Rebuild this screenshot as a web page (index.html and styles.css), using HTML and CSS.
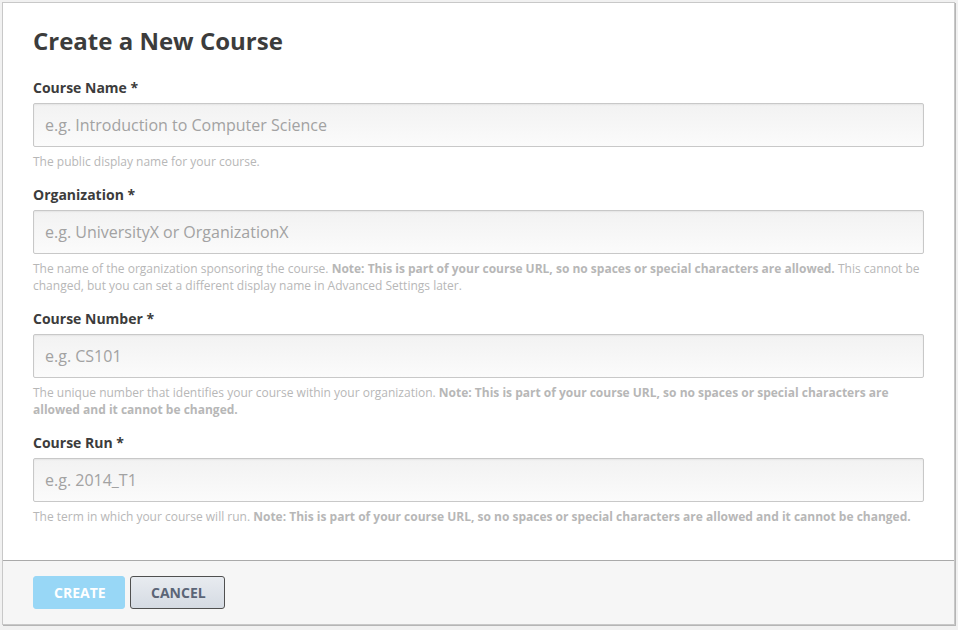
FILE: index.html
```html
<!DOCTYPE html>
<html>
<head>
<meta charset="utf-8">
<link rel="stylesheet" href="styles.css">
</head>
<body>
<div class="card">
  <form class="form">
    <h1 class="title">Create a New Course</h1>
    <div class="field">
      <label class="label">Course Name *</label>
      <input class="input" type="text" placeholder="e.g. Introduction to Computer Science">
      <p class="help">The public display name for your course.</p>
    </div>
    <div class="field">
      <label class="label">Organization *</label>
      <input class="input" type="text" placeholder="e.g. UniversityX or OrganizationX">
      <p class="help">The name of the organization sponsoring the course. <strong>Note: This is part of your course URL, so no spaces or special characters are allowed.</strong> This cannot be changed, but you can set a different display name in Advanced Settings later.</p>
    </div>
    <div class="field">
      <label class="label">Course Number *</label>
      <input class="input" type="text" placeholder="e.g. CS101">
      <p class="help">The unique number that identifies your course within your organization. <strong>Note: This is part of your course URL, so no spaces or special characters are allowed and it cannot be changed.</strong></p>
    </div>
    <div class="field">
      <label class="label">Course Run *</label>
      <input class="input" type="text" placeholder="e.g. 2014_T1">
      <p class="help">The term in which your course will run. <strong>Note: This is part of your course URL, so no spaces or special characters are allowed and it cannot be changed.</strong></p>
    </div>
  </form>
  <div class="actions">
    <button class="btn btn-create" type="button">Create</button>
    <button class="btn btn-cancel" type="button">Cancel</button>
  </div>
</div>
</body>
</html>
```
FILE: styles.css
```css
html, body {
  margin: 0;
  padding: 0;
}
body {
  background: #f1f1f1;
  padding: 2px 3px 4px 2px;
  font-family: "Open Sans", "DejaVu Sans", sans-serif;
  color: #3c3c3c;
}
.card {
  background: #fff;
  border: 1px solid #c8c8c8;
  box-shadow: 1px 1px 0 #b5b5b5;
  height: 623px;
  display: flex;
  flex-direction: column;
  box-sizing: border-box;
}
.form {
  padding: 22px 30px 0 30px;
  flex: 1;
}
.title {
  margin: 0 0 20px 0;
  font-size: 24px;
  line-height: 32px;
  font-weight: 700;
  color: #3c3c3c;
}
.field {
  margin-bottom: 14px;
}
.label {
  display: block;
  font-size: 14px;
  line-height: 20px;
  font-weight: 700;
  color: #3c3c3c;
  padding-top: 1px;
  margin-bottom: 5px;
}
.input {
  display: block;
  width: 100%;
  height: 44px;
  box-sizing: border-box;
  border: 1px solid #c8c8c8;
  border-radius: 2px;
  padding: 0 11px;
  font-family: "Open Sans", "DejaVu Sans", sans-serif;
  font-size: 16px;
  color: #3c3c3c;
  background: linear-gradient(#f2f2f2, #fbfbfb);
  box-shadow: inset 0 1px 2px rgba(0,0,0,0.06);
  outline: none;
}
.input::placeholder {
  color: #a2a2a2;
}
.help {
  margin: 6px 0 0 0;
  font-size: 12px;
  line-height: 17px;
  color: #b7b7b7;
}
.help strong {
  font-weight: 700;
}
.actions {
  border-top: 1px solid #aaa;
  background: #f6f6f6;
  padding: 15px 30px;
  display: flex;
  gap: 5px;
  height: 64px;
  flex: none;
  box-sizing: border-box;
}
.btn {
  height: 33px;
  box-sizing: border-box;
  font-family: "Open Sans", "DejaVu Sans", sans-serif;
  font-size: 14px;
  font-weight: 700;
  text-transform: uppercase;
  border-radius: 3px;
  padding: 0 20px;
  cursor: pointer;
}
.btn-create {
  width: 92px;
  background: #98d7f6;
  border: 1px solid #98d7f6;
  color: #fff;
}
.btn-cancel {
  width: 95px;
  background: linear-gradient(#e8ebf0, #d5dbe3);
  border: 1px solid #505050;
  color: #5b6577;
}
```
